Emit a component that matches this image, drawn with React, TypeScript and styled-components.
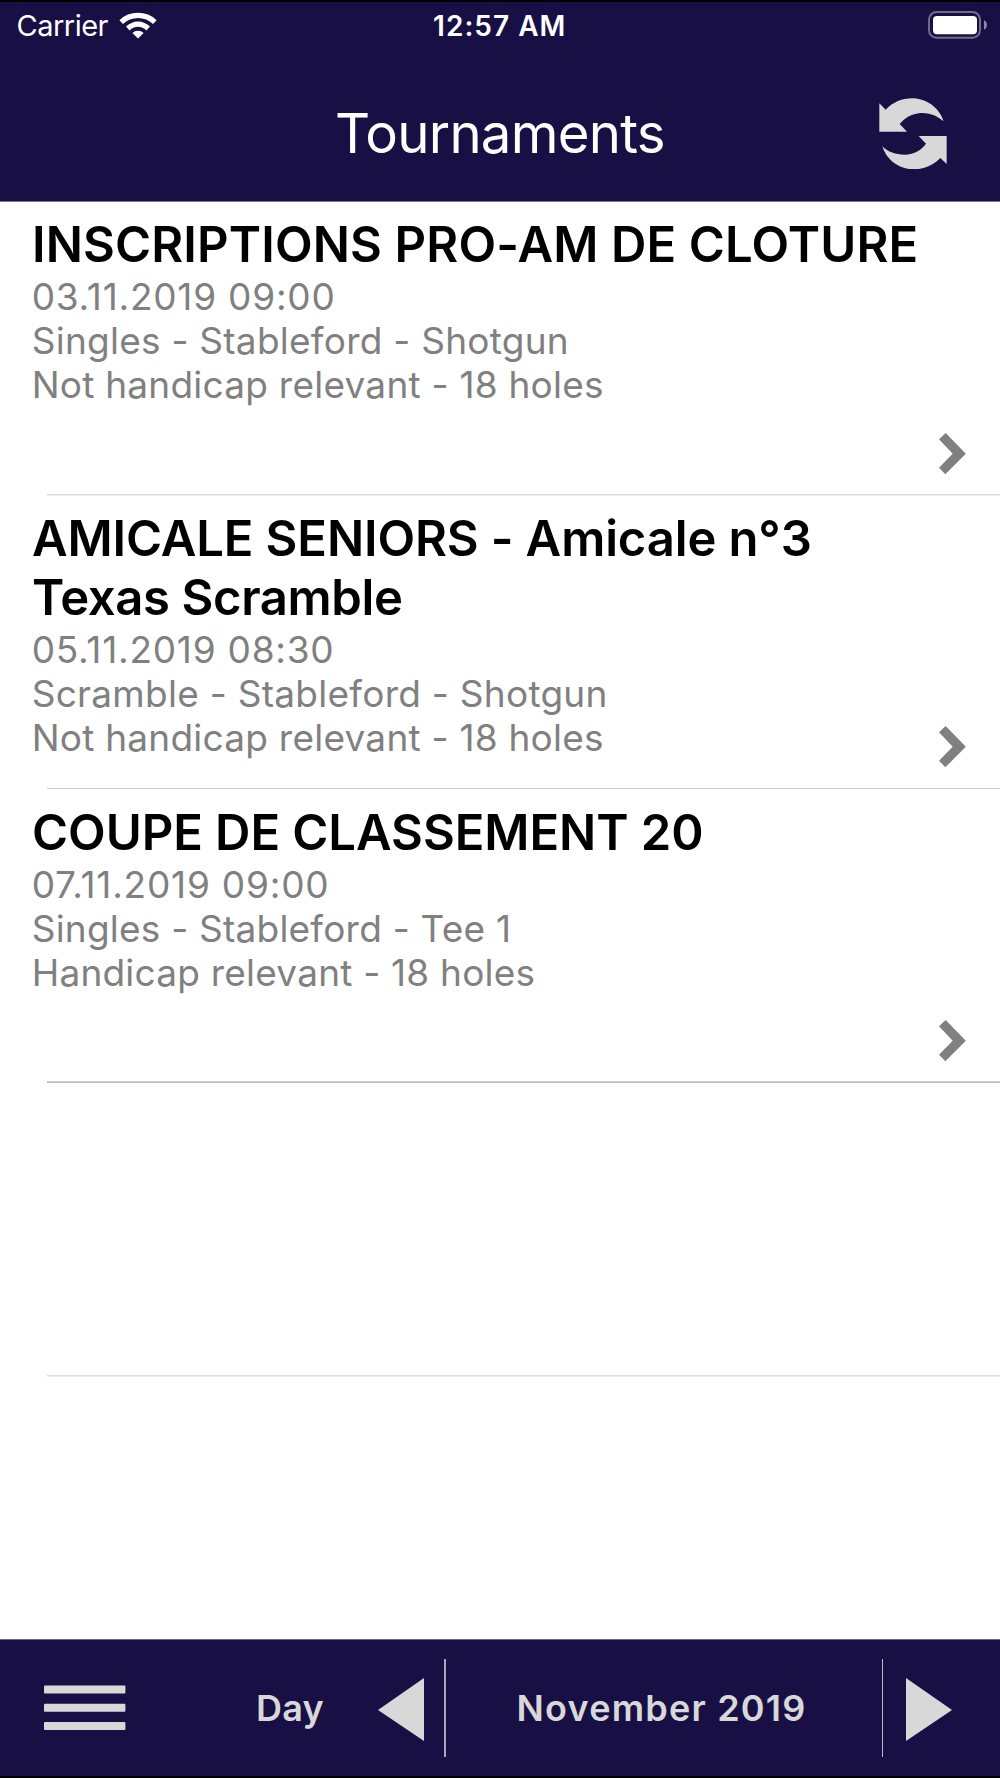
import React from "react";
import styled, { createGlobalStyle } from "styled-components";

const navy = "#180f45";
const silver = "#d8d8d8";

const GlobalStyle = createGlobalStyle`
  * { box-sizing: border-box; }
  body { margin: 0; background: #fff; }
`;

const Screen = styled.div`
  display: flex;
  flex-direction: column;
  width: 1000px;
  height: 1778px;
  overflow: hidden;
  background: #fff;
  font-family: Inter, "Liberation Sans", sans-serif;
`;

const Header = styled.header`
  display: flex;
  flex-direction: column;
  flex: none;
  height: 202px;
  border-top: 2px solid #000;
  border-bottom: 1px solid #78738f;
  background: ${navy};
  color: #fff;
`;

const StatusBar = styled.div`
  display: grid;
  grid-template-columns: 1fr auto 1fr;
  align-items: center;
  height: 46px;
  padding: 0 13px 0 16.5px;
`;

const Carrier = styled.div`
  display: flex;
  align-items: center;
  gap: 11.5px;
  font-size: 29px;
  letter-spacing: -0.52px;
`;

const Clock = styled.time`
  padding: 2px 4px 0 0;
  font-size: 28px;
  font-weight: 600;
  letter-spacing: 1.02px;
`;

const Battery = styled.div`
  display: flex;
  justify-content: flex-end;
  padding-bottom: 1px;
`;

const TitleBar = styled.div`
  display: grid;
  grid-template-columns: 1fr auto 1fr;
  align-items: center;
  flex: 1;
  padding-top: 17px;
`;

const Title = styled.h1`
  grid-column: 2;
  margin: 0;
  font-size: 54.5px;
  font-weight: 400;
  letter-spacing: -0.72px;
`;

const IconButton = styled.button`
  display: flex;
  padding: 0;
  border: 0;
  background: none;
  color: ${silver};
`;

const RefreshButton = styled(IconButton)`
  justify-self: end;
  margin-right: 53px;
  padding-top: 1px;
`;

const List = styled.main`
  display: flex;
  flex-direction: column;
  flex: 1;
`;

const Row = styled.article<{ $height: number }>`
  display: flex;
  flex-direction: column;
  flex: none;
  height: ${(p) => p.$height}px;
`;

const RowContent = styled.div<{ $inset?: number }>`
  display: flex;
  justify-content: space-between;
  flex: 1;
  padding: ${(p) => p.$inset ?? 13}px 34px 0 32px;
`;

const Divider = styled.div<{ $top: string; $bottom?: string }>`
  margin-left: 47px;
  border-top: 1px solid ${(p) => p.$top};
  border-bottom: ${(p) => (p.$bottom ? `1px solid ${p.$bottom}` : "0")};
`;

const Name = styled.h2`
  margin: 0;
  color: #000;
  font-size: 49px;
  font-weight: 600;
  line-height: 59px;
  white-space: nowrap;
`;

const NameLine = styled.span<{ $tracking: number }>`
  display: block;
  letter-spacing: ${(p) => p.$tracking}px;
`;

const Details = styled.div`
  margin: 1px 0 0 -0.3px;
  color: #808080;
  font-size: 37px;
  line-height: 44px;
  white-space: nowrap;
`;

const Detail = styled.div<{ $tracking: number }>`
  letter-spacing: ${(p) => p.$tracking}px;
`;

const ChevronIcon = styled.svg<{ $gap: number }>`
  align-self: flex-end;
  flex: none;
  width: 27px;
  height: 42px;
  margin-bottom: ${(p) => p.$gap}px;
  fill: #808080;
`;

const Footer = styled.footer`
  display: grid;
  grid-template-columns: 206px 169px 69px 439px 1fr;
  align-items: center;
  flex: none;
  height: 139px;
  border-top: 1px solid #6c6988;
  border-bottom: 2px solid #000;
  background: ${navy};
  color: ${silver};
  font-size: 36px;
  font-weight: 600;
`;

const MenuButton = styled(IconButton)`
  padding-left: 43.7px;
`;

const Mode = styled.div`
  padding-right: 1px;
  text-align: center;
  letter-spacing: 0.21px;
`;

const Month = styled.div`
  display: flex;
  align-items: center;
  justify-content: center;
  height: 98px;
  padding-right: 5px;
  border-left: 2px solid #a8a6b3;
  border-right: 1px solid #bab8c4;
  letter-spacing: 1.2px;
`;

const StepButton = styled(IconButton)<{ $indent: number }>`
  padding: 3px 0 0 ${(p) => p.$indent}px;
`;

const WifiIcon = () => (
  <svg width="38" height="28" viewBox="-19 -27.5 38 28" fill="#fff">
    <path d="M-18.6-18.3A26.7 26.7 0 0 1 18.6-18.3L15-14.4A21.2 21.2 0 0 0-15-14.4Z" />
    <path d="M-12-11.9A16.9 16.9 0 0 1 12-11.9L8.4-8.1A11.6 11.6 0 0 0-8.4-8.1Z" />
    <path d="M-5.6-5.5A8 8 0 0 1 5.6-5.5L0 0Z" />
  </svg>
);

const BatteryIcon = () => (
  <svg width="60" height="28" viewBox="0 0 60 28">
    <rect x="2" y="1.1" width="51" height="25.6" rx="7.5" fill="none" stroke="#716c8d" strokeWidth="2" />
    <rect x="6" y="5" width="44" height="18.2" rx="4" fill="#fff" />
    <path d="M57 9.2C61 10.8 61 17 57 18.8Z" fill="#8b87a2" />
  </svg>
);

const RefreshIcon = () => (
  <svg width="68" height="71.5" viewBox="118.5 293 203 214.5" fill="currentColor">
    <path d="M119 309L138 328C160 305 188 294 217 294C260 294 299 322 312 363C292 345 268 337 243 338C215 340 194 354 180 371L202 394H119Z" />
    <path d="M321 491L302 473C280 496 250 507 222 507C180 507 141 481 128 438C145 455 168 463 195 463C225 462 245 449 259 430L237 407H321Z" />
  </svg>
);

const MenuIcon = () => (
  <svg width="82" height="46" viewBox="0 0 82 46" fill="currentColor">
    <rect y="0.6" width="81.4" height="8" rx="1" />
    <rect y="18.8" width="81.4" height="8" rx="1" />
    <rect y="37" width="81.4" height="8" rx="1" />
  </svg>
);

const Chevron = ({ gap }: { gap: number }) => (
  <ChevronIcon $gap={gap} viewBox="1317 697 81 126">
    <path d="M1337 697L1397.500 759L1336 821L1317 801L1358 759L1317 716Z" />
  </ChevronIcon>
);

type Line = { text: string; tracking: number };
type Tournament = {
  height: number;
  inset: number;
  chevronGap: number;
  name: Line[];
  details: Line[];
  divider: [string, string?];
};

const tournaments: Tournament[] = [
  {
    height: 294,
    inset: 13,
    chevronGap: 19.5,
    name: [{ text: "INSCRIPTIONS PRO-AM DE CLOTURE", tracking: 0.13 }],
    details: [
      { text: "03.11.2019 09:00", tracking: 0.77 },
      { text: "Singles - Stableford - Shotgun", tracking: 0.25 },
      { text: "Not handicap relevant - 18 holes", tracking: 0.24 },
    ],
    divider: ["#d6d6d6", "#eeeeee"],
  },
  {
    height: 293,
    inset: 13,
    chevronGap: 20,
    name: [
      { text: "AMICALE SENIORS - Amicale n°3", tracking: -0.13 },
      { text: "Texas Scramble", tracking: -0.36 },
    ],
    details: [
      { text: "05.11.2019 08:30", tracking: 0.77 },
      { text: "Scramble - Stableford - Shotgun", tracking: 0.27 },
      { text: "Not handicap relevant - 18 holes", tracking: 0.24 },
    ],
    divider: ["#cacaca"],
  },
  {
    height: 294,
    inset: 14,
    chevronGap: 19,
    name: [{ text: "COUPE DE CLASSEMENT 20", tracking: -0.06 }],
    details: [
      { text: "07.11.2019 09:00", tracking: 0.79 },
      { text: "Singles - Stableford - Tee 1", tracking: 0.22 },
      { text: "Handicap relevant - 18 holes", tracking: 0.22 },
    ],
    divider: ["#cccccc", "#bcbcbc"],
  },
];

export default function App() {
  return (
    <Screen>
      <GlobalStyle />
      <Header>
        <StatusBar>
          <Carrier>
            Carrier
            <WifiIcon />
          </Carrier>
          <Clock>12:57 AM</Clock>
          <Battery>
            <BatteryIcon />
          </Battery>
        </StatusBar>
        <TitleBar>
          <Title>Tournaments</Title>
          <RefreshButton aria-label="Refresh">
            <RefreshIcon />
          </RefreshButton>
        </TitleBar>
      </Header>
      <List>
        {tournaments.map((t) => (
          <Row key={t.name[0].text} $height={t.height}>
            <RowContent $inset={t.inset}>
              <div>
                <Name>
                  {t.name.map((l) => (
                    <NameLine key={l.text} $tracking={l.tracking}>{l.text}</NameLine>
                  ))}
                </Name>
                <Details>
                  {t.details.map((l) => (
                    <Detail key={l.text} $tracking={l.tracking}>{l.text}</Detail>
                  ))}
                </Details>
              </div>
              <Chevron gap={t.chevronGap} />
            </RowContent>
            <Divider $top={t.divider[0]} $bottom={t.divider[1]} />
          </Row>
        ))}
        <Row $height={294}>
          <RowContent />
          <Divider $top="#dcdcdc" $bottom="#ececec" />
        </Row>
      </List>
      <Footer>
        <MenuButton aria-label="Menu">
          <MenuIcon />
        </MenuButton>
        <Mode>Day</Mode>
        <StepButton aria-label="Previous" $indent={3}>
          <svg width="46" height="63" viewBox="0 0 46 63" fill="currentColor">
            <path d="M46 0V63L0 32Z" />
          </svg>
        </StepButton>
        <Month>November 2019</Month>
        <StepButton aria-label="Next" $indent={23}>
          <svg width="46" height="63" viewBox="0 0 46 63" fill="currentColor">
            <path d="M0 0V63L46 32Z" />
          </svg>
        </StepButton>
      </Footer>
    </Screen>
  );
}
